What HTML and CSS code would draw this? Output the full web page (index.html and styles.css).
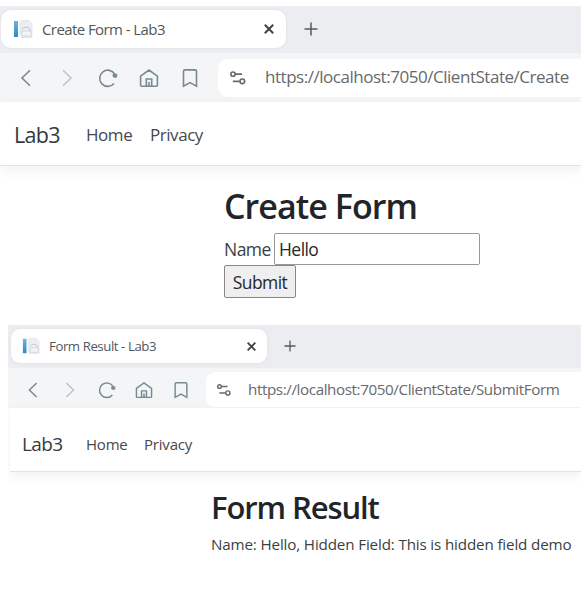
FILE: index.html
```html
<!DOCTYPE html>
<html lang="en">
<head>
<meta charset="utf-8">
<title>Create Form - Lab3</title>
<link rel="stylesheet" href="styles.css">
</head>
<body>
<svg class="defs" width="0" height="0" aria-hidden="true">
  <linearGradient id="spine" x2="0" y2="1"><stop stop-color="#6bb5dd"/><stop offset="1" stop-color="#3487c4"/></linearGradient>
  <symbol id="page" viewBox="0 0 20 20"><path d="M1 2h4v16H1z" fill="url(#spine)"/><path d="M6 3h2v14H6z" fill="#eef2f6"/><path d="M8 1.5h8l3 3v14H8z" fill="#eceef1" stroke="#dfe2e6" stroke-width=".7"/><path d="M9 10q4-4 8 0v2" stroke="#c3c7cd"/><path d="M9 12h9v5H9z" fill="#f4f5f7" stroke="#cdd1d7" stroke-width=".8"/></symbol>
  <symbol id="back" viewBox="0 0 20 20"><path d="M14 2.2 6 10l8 7.8"/></symbol>
  <symbol id="forward" viewBox="0 0 20 20"><path d="m6 2.2 8 7.8-8 7.8"/></symbol>
  <symbol id="reload" viewBox="0 0 20 20"><path d="M16.8 6.2A8.1 8.1 0 1 0 16 15.5"/><circle cx="16.6" cy="7.6" r="2.1" fill="currentColor" stroke="none"/><path d="M19.2 5v4.5h-3Z" fill="currentColor" stroke="none"/></symbol>
  <symbol id="home" viewBox="0 0 20 20"><path d="M1.6 8.2 10 2l8.4 6.2v9q0 1-1 1H2.6q-1 0-1-1zM7.3 18v-7h5.4v7M10 18v-4"/></symbol>
  <symbol id="bookmark" viewBox="0 0 20 20"><path d="M3.5 3.2q0-1.3 1.3-1.3h10.4q1.3 0 1.3 1.3v15L10 14.6 3.5 18.2z"/></symbol>
  <symbol id="tune" viewBox="0 0 20 20"><circle cx="4.4" cy="5.7" r="2.3"/><path d="M6.9 5.7h7.6M4.2 13.7h7.6"/><circle cx="14.8" cy="13.7" r="2.6"/></symbol>
  <symbol id="close" viewBox="0 0 12 12"><path d="m1.8 1.8 8.4 8.4m0-8.4-8.4 8.4"/></symbol>
  <symbol id="plus" viewBox="0 0 14 14"><path d="M7 .5v13M.5 7h13"/></symbol>
</svg>

<section class="browser create">
  <div class="tabs">
    <div class="tab"><svg class="favicon"><use href="#page"/></svg><span class="title">Create Form - Lab3</span><svg class="close"><use href="#close"/></svg></div>
    <svg class="plus"><use href="#plus"/></svg>
  </div>
  <div class="toolbar">
    <div class="buttons"><svg><use href="#back"/></svg><svg class="dim"><use href="#forward"/></svg><svg><use href="#reload"/></svg><svg><use href="#home"/></svg><svg><use href="#bookmark"/></svg></div>
    <div class="address"><svg><use href="#tune"/></svg><span class="url">https://localhost:7050/ClientState/Create</span></div>
  </div>
  <nav><a class="brand">Lab3</a><a class="home">Home</a><a class="privacy">Privacy</a></nav>
  <main>
    <h1>Create Form</h1>
    <form>
      <div class="field"><label for="name">Name</label><input id="name" value="Hello"></div>
      <button type="button">Submit</button>
    </form>
  </main>
</section>

<section class="browser result">
  <div class="tabs">
    <div class="tab"><svg class="favicon"><use href="#page"/></svg><span class="title">Form Result - Lab3</span><svg class="close"><use href="#close"/></svg></div>
    <svg class="plus"><use href="#plus"/></svg>
  </div>
  <div class="toolbar">
    <div class="buttons"><svg><use href="#back"/></svg><svg class="dim"><use href="#forward"/></svg><svg><use href="#reload"/></svg><svg><use href="#home"/></svg><svg><use href="#bookmark"/></svg></div>
    <div class="address"><svg><use href="#tune"/></svg><span class="url">https://localhost:7050/ClientState/SubmitForm</span></div>
  </div>
  <nav><a class="brand">Lab3</a><a class="home">Home</a><a class="privacy">Privacy</a></nav>
  <main>
    <h1>Form Result</h1>
    <p>Name: Hello, Hidden Field: This is hidden field demo</p>
  </main>
</section>
</body>
</html>
```
FILE: styles.css
```css
* { box-sizing: border-box; }
body { margin: 0; padding-top: 6px; height: 598px; overflow: hidden; background: #fff; color: #3a3f44; font-family: "Open Sans", "Noto Sans", sans-serif; white-space: nowrap; }
.defs { position: absolute; }
svg { display: block; flex: none; fill: none; stroke: currentColor; }
.browser { overflow: hidden; }
.tabs { display: flex; align-items: center; background: #ecedf1; }
.tab { display: flex; align-items: center; background: #fff; box-shadow: 0 0 3px #d9dce2; color: #54575b; }
.favicon { stroke: none; }
.title { flex: 1; }
.close { color: #3f4247; stroke-width: 2; }
.plus { color: #55585d; stroke-width: 1.5; }
.toolbar { display: flex; align-items: center; background: #f3f5f7; }
.buttons { display: flex; color: #788a91; stroke-width: 1.6; }
.dim { color: #bcc5ca; }
.address { display: flex; align-items: center; flex: 1; background: #fff; color: #68696c; }
.address svg { color: #666b70; stroke-width: 1.8; }
nav { display: flex; align-items: center; border-bottom: 1px solid #e2e3e4; box-shadow: 0 4px 12px rgb(0 0 0 / 6%); color: #45494d; }
.brand { color: #35393d; }
h1, p { margin: 0; }
h1 { color: #212529; font-weight: 600; }
.field { display: flex; align-items: center; }
input, button { margin: 0; font: inherit; color: #26282b; letter-spacing: inherit; border: 1px solid #999; border-radius: 2px; }

.create { height: 319px; }
.create .tabs { height: 47px; padding: 0 0 1px 1px; }
.create .tab { width: 285px; height: 38px; padding: 0 11px 0 12px; border-radius: 10px; }
.create .favicon { width: 20px; height: 20px; margin-right: 9px; }
.create .title { font-size: 15px; letter-spacing: -.58px; }
.create .close { width: 12px; height: 12px; }
.create .plus { width: 14px; height: 14px; margin-left: 18px; }
.create .toolbar { height: 49px; padding-left: 16px; }
.create .buttons { gap: 21px; width: 202px; }
.create .buttons svg { width: 20px; height: 20px; }
.create .address { height: 38px; border-radius: 10px 0 0 10px; padding-left: 11px; }
.create .address svg { width: 18px; height: 18px; margin-right: 18px; }
.create .url { margin-top: -2px; font-size: 17px; letter-spacing: -.47px; }
.create nav { height: 64px; padding: 2px 0 0 14px; font-size: 17px; letter-spacing: -.45px; }
.create .brand { width: 72px; font-size: 21.5px; letter-spacing: -.7px; }
.create .home { width: 64px; }
.create main { padding: 19px 0 0 224px; font-size: 17.5px; letter-spacing: -.55px; }
.create h1 { height: 48px; line-height: 42px; font-size: 34px; letter-spacing: -.95px; }
.create .field { height: 32px; }
.create label { width: 50px; }
.create input { width: 206px; height: 32px; padding: 0 4px; }
.create button { display: block; width: 72px; height: 33px; padding: 0; background: #efefef; border-color: #888; }

.result { margin-left: 8px; }
.result .tabs { height: 43px; padding: 0 0 1px 3px; }
.result .tab { width: 256px; height: 34px; padding: 0 10px 0 11px; border-radius: 9px; }
.result .favicon { width: 18px; height: 18px; margin-right: 9px; }
.result .title { font-size: 13.2px; letter-spacing: -.42px; }
.result .close { width: 11px; height: 11px; }
.result .plus { width: 12px; height: 12px; margin-left: 17px; }
.result .toolbar { height: 40px; padding: 3px 0 0 16px; }
.result .buttons { gap: 19px; width: 182px; }
.result .buttons svg { width: 18px; height: 18px; }
.result .address { height: 35px; border-radius: 9px 0 0 9px; padding-left: 10px; }
.result .address svg { width: 16px; height: 16px; margin-right: 16px; }
.result .url { margin-top: -1px; font-size: 15.2px; letter-spacing: -.4px; }
.result nav { height: 64px; margin-left: 2px; padding: 8px 0 0 12px; font-size: 15px; letter-spacing: -.2px; }
.result .brand { width: 64px; font-size: 19px; letter-spacing: -.6px; }
.result .home { width: 58px; }
.result main { padding: 16px 0 0 203px; font-size: 15.2px; letter-spacing: -.15px; }
.result h1 { height: 44px; line-height: 38px; font-size: 31px; letter-spacing: -1.1px; }
.result p { line-height: 24px; }
```
